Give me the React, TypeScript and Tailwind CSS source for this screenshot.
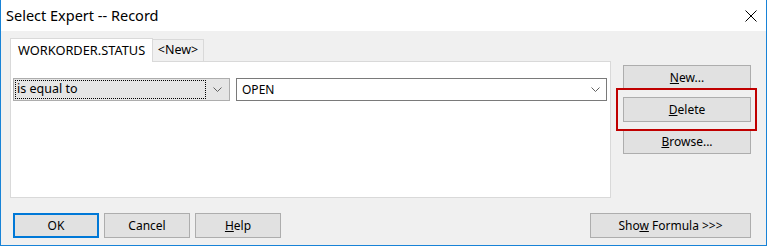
import React from "react";

const font = { fontFamily: '"Noto Sans", "Open Sans", sans-serif' };

function Chevron() {
  return (
    <svg width="9" height="5" viewBox="0 0 9 5" className="shrink-0">
      <path d="M0.5 0.5 L4.5 4.5 L8.5 0.5" fill="none" stroke="#606060" strokeWidth="1" />
    </svg>
  );
}

function Btn({ children, className = "" }: { children: React.ReactNode; className?: string }) {
  return (
    <div
      className={`h-[25px] flex items-center justify-center bg-[#e1e1e1] border border-[#adadad] text-[12px] text-black ${className}`}
    >
      {children}
    </div>
  );
}

export default function App() {
  return (
    <div
      className="w-[767px] h-[246px] flex flex-col bg-[#f0f0f0] border-x border-b border-[#1883d7] text-black"
      style={font}
    >
      {/* title bar */}
      <div className="h-[31px] bg-white flex items-center justify-between pl-[5px] pr-[9px]">
        <span className="text-[14.5px] leading-none">Select Expert -- Record</span>
        <svg width="12" height="12" viewBox="0 0 12 12">
          <path d="M0.5 0.5 L11.5 11.5 M11.5 0.5 L0.5 11.5" stroke="#000" strokeWidth="1" />
        </svg>
      </div>

      <div className="flex pt-[7px] pl-[9px]">
        {/* tabs + panel */}
        <div className="w-[601px] flex flex-col">
          <div className="flex items-end h-[23px]">
            <div className="h-[24px] -mb-px z-10 w-[143px] bg-white border-x border-t border-[#d9d9d9] flex items-center pl-[7px] text-[12.8px]">
              WORKORDER.STATUS
            </div>
            <div className="h-[22px] w-[51px] bg-[#f0f0f0] border-r border-t border-[#d9d9d9] flex items-center justify-center text-[12.5px]">
              &lt;New&gt;
            </div>
          </div>
          <div className="h-[137px] bg-white border border-[#d9d9d9] pt-[16px] pl-[2px] flex gap-[6px]">
            <div className="w-[217px] h-[23px] bg-[#e5e5e5] border border-[#adadad] flex items-center p-px">
              <div className="flex-1 h-full border border-dotted border-black flex items-center pl-[1px] text-[12.5px]">
                is equal to
              </div>
              <div className="w-[22px] flex justify-center">
                <Chevron />
              </div>
            </div>
            <div className="w-[371px] h-[23px] bg-white border border-[#7a7a7a] flex items-center justify-between pl-[5px] pr-[6px] text-[12px]">
              <span>OPEN</span>
              <Chevron />
            </div>
          </div>
        </div>

        {/* right buttons */}
        <div className="relative ml-[12px] pt-[27px] w-[128px] flex flex-col gap-[7px]">
          <Btn>
            <span>
              <u>N</u>ew...
            </span>
          </Btn>
          <Btn>
            <span>
              <u>D</u>elete
            </span>
          </Btn>
          <Btn>
            <span>
              <u>B</u>rowse...
            </span>
          </Btn>
          <div className="absolute left-[-7px] top-[50px] w-[141px] h-[43px] border-2 border-[#c00000]" />
        </div>
      </div>

      {/* bottom buttons */}
      <div className="flex items-center pt-[15px] pl-[12px] pr-[15px]">
        <Btn className="w-[86px] !border-2 !border-[#0078d7]">OK</Btn>
        <Btn className="w-[86px] ml-[5px]">Cancel</Btn>
        <Btn className="w-[86px] ml-[5px]">
          <span>
            <u>H</u>elp
          </span>
        </Btn>
        <Btn className="w-[161px] ml-auto">
          <span>
            Sho<u>w</u> Formula &gt;&gt;&gt;
          </span>
        </Btn>
      </div>
    </div>
  );
}
